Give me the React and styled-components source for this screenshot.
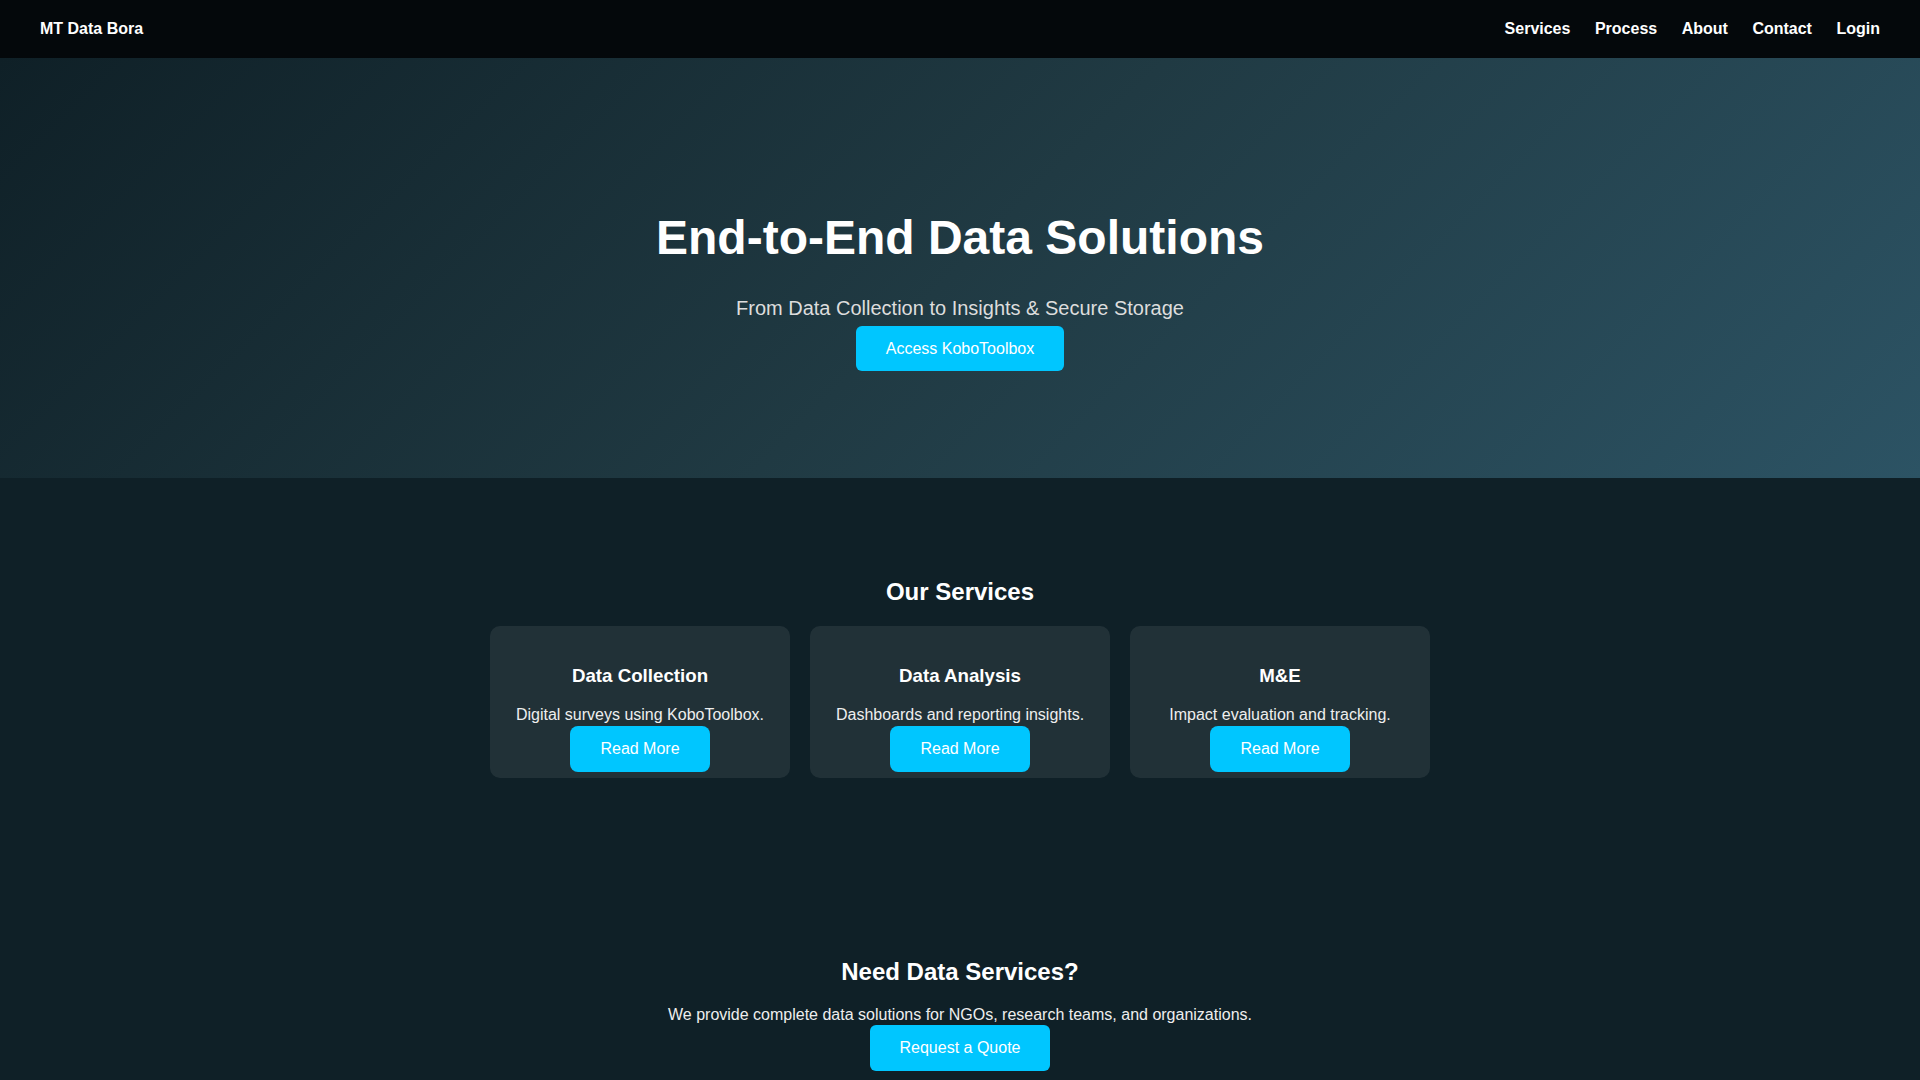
import styled, { createGlobalStyle } from "styled-components";

const GlobalStyle = createGlobalStyle`
  body {
    margin: 0;
    background: #0f2027;
    color: #fff;
    font-family: "Liberation Sans", Arial, sans-serif;
  }
`;

const Nav = styled.nav`
  display: flex;
  justify-content: space-between;
  align-items: center;
  padding: 20px 40px;
  background: #04080b;
`;

const Logo = styled.div`
  font-size: 16px;
  font-weight: bold;
  color: #fff;
`;

const NavLinks = styled.div`
  display: flex;
  gap: 24.5px;

  a {
    color: #fff;
    font-weight: bold;
    text-decoration: none;
    font-size: 16px;
  }
`;

const Hero = styled.header`
  padding: 120px 20px;
  text-align: center;
  background: linear-gradient(135deg, #0f2027, #203a43, #2c5364);

  h1 {
    font-size: 48px;
    margin: 32px 0;
  }

  p {
    font-size: 20px;
    color: #ddd;
    margin: 0 0 20px;
  }
`;

const Button = styled.a`
  background: #00c6ff;
  color: #fff;
  padding: 0.9rem ${(p) => (p.$wide ? "1.9rem" : "1.85rem")};
  border-radius: ${(p) => (p.$wide ? "8px" : "6px")};
  text-decoration: none;
  font-size: 16px;
`;

const Section = styled.section`
  padding: 80px 20px;
  text-align: center;

  h2 {
    font-size: 24px;
    margin: 20px 0;
  }

  p {
    margin: 0 0 16px;
    color: #eee;
  }
`;

const ServicesSection = styled(Section)`
  padding-bottom: 79.5px;
`;

const CardGrid = styled.div`
  display: grid;
  grid-template-columns: repeat(3, 300px);
  gap: 20px;
  justify-content: center;
`;

const Card = styled.div`
  background: rgba(255, 255, 255, 0.08);
  border-radius: 10px;
  padding: 20px;

  h3 {
    font-size: 1.17em;
    margin: 18.72px 0 19.6px;
  }
`;

const services = [
  { title: "Data Collection", text: "Digital surveys using KoboToolbox." },
  { title: "Data Analysis", text: "Dashboards and reporting insights." },
  { title: "M&E", text: "Impact evaluation and tracking." },
];

export default function App() {
  return (
    <>
      <GlobalStyle />
      <Nav>
        <Logo>MT Data Bora</Logo>
        <NavLinks>
          <a href="#services">Services</a>
          <a href="#process">Process</a>
          <a href="#about">About</a>
          <a href="#contact">Contact</a>
          <a href="#login">Login</a>
        </NavLinks>
      </Nav>
      <Hero>
        <h1>End-to-End Data Solutions</h1>
        <p>From Data Collection to Insights &amp; Secure Storage</p>
        <Button href="#kobo">Access KoboToolbox</Button>
      </Hero>
      <ServicesSection id="services">
        <h2>Our Services</h2>
        <CardGrid>
          {services.map((s) => (
            <Card key={s.title}>
              <h3>{s.title}</h3>
              <p>{s.text}</p>
              <Button href="#more" $wide>
                Read More
              </Button>
            </Card>
          ))}
        </CardGrid>
      </ServicesSection>
      <Section id="contact">
        <h2>Need Data Services?</h2>
        <p>We provide complete data solutions for NGOs, research teams, and organizations.</p>
        <Button href="#quote">Request a Quote</Button>
      </Section>
    </>
  );
}
